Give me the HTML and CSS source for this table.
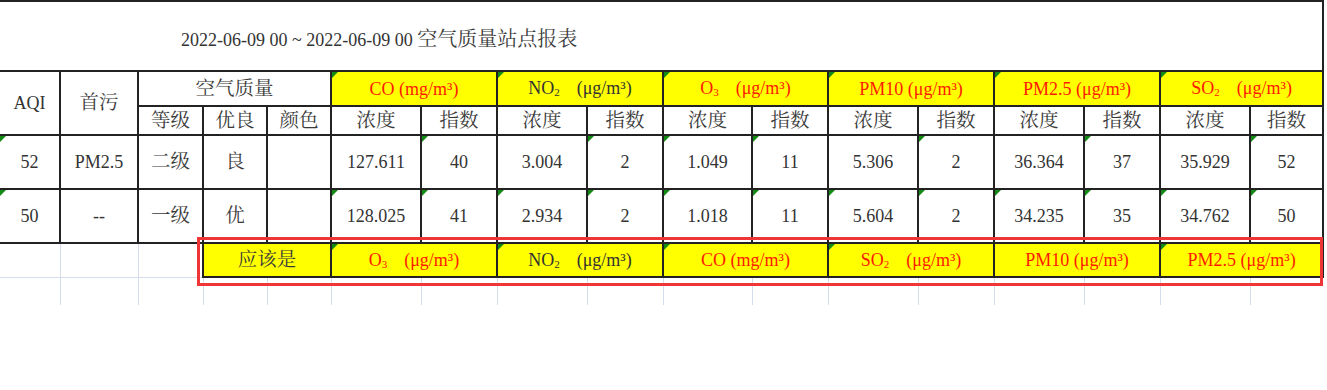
FILE: index.html
```html
<!DOCTYPE html>
<html lang="zh-CN">
<head>
<meta charset="utf-8">
<title>空气质量站点报表</title>
<link rel="stylesheet" href="styles.css">
</head>
<body>
<div class="sheet">
  <table class="grid">
    <colgroup>
      <col class="c60"><col class="c78"><col class="c65"><col class="c64"><col class="c64">
      <col class="c90"><col class="c76"><col class="c90"><col class="c76">
      <col class="c89"><col class="c76"><col class="c90"><col class="c76">
      <col class="c90"><col class="c76"><col class="c90"><col class="c73">
    </colgroup>
    <tr class="r-title">
      <td colspan="17" class="title">2022-06-09 00 ~ 2022-06-09 00 <span class="zh">空气质量站点报表</span></td>
    </tr>
    <tr class="r-h1">
      <td rowspan="2" class="first">AQI</td>
      <td rowspan="2" class="zh">首污</td>
      <td colspan="3" class="zh">空气质量</td>
      <td colspan="2" class="y red t">CO (mg/m³)</td>
      <td colspan="2" class="y t">NO<span class="sub">2</span><span class="gap"></span>(μg/m³)</td>
      <td colspan="2" class="y red t">O<span class="sub">3</span><span class="gap"></span>(μg/m³)</td>
      <td colspan="2" class="y red t">PM10 (μg/m³)</td>
      <td colspan="2" class="y red t">PM2.5 (μg/m³)</td>
      <td colspan="2" class="y red t">SO<span class="sub">2</span><span class="gap"></span>(μg/m³)</td>
    </tr>
    <tr class="r-h2">
      <td class="zh">等级</td><td class="zh">优良</td><td class="zh">颜色</td>
      <td class="zh">浓度</td><td class="zh">指数</td>
      <td class="zh">浓度</td><td class="zh">指数</td>
      <td class="zh">浓度</td><td class="zh">指数</td>
      <td class="zh">浓度</td><td class="zh">指数</td>
      <td class="zh">浓度</td><td class="zh">指数</td>
      <td class="zh">浓度</td><td class="zh">指数</td>
    </tr>
    <tr class="r-d">
      <td class="first t">52</td><td>PM2.5</td><td class="zh">二级</td><td class="zh">良</td><td></td>
      <td>127.611</td><td class="t">40</td>
      <td>3.004</td><td class="t">2</td>
      <td class="t">1.049</td><td class="t">11</td>
      <td>5.306</td><td class="t">2</td>
      <td>36.364</td><td class="t">37</td>
      <td>35.929</td><td class="t">52</td>
    </tr>
    <tr class="r-d">
      <td class="first t">50</td><td>--</td><td class="zh">一级</td><td class="zh">优</td><td></td>
      <td class="t">128.025</td><td class="t">41</td>
      <td class="t">2.934</td><td class="t">2</td>
      <td class="t">1.018</td><td class="t">11</td>
      <td class="t">5.604</td><td class="t">2</td>
      <td class="t">34.235</td><td class="t">35</td>
      <td class="t">34.762</td><td class="t">50</td>
    </tr>
    <tr class="r-b">
      <td class="g first"></td><td class="g"></td><td class="g"></td>
      <td colspan="2" class="y zh">应该是</td>
      <td colspan="2" class="y red t">O<span class="sub">3</span><span class="gap"></span>(μg/m³)</td>
      <td colspan="2" class="y t">NO<span class="sub">2</span><span class="gap"></span>(μg/m³)</td>
      <td colspan="2" class="y red t">CO (mg/m³)</td>
      <td colspan="2" class="y red t">SO<span class="sub">2</span><span class="gap"></span>(μg/m³)</td>
      <td colspan="2" class="y red">PM10 (μg/m³)</td>
      <td colspan="2" class="y red t">PM2.5 (μg/m³)</td>
    </tr>
    <tr class="r-e">
      <td class="first"></td><td></td><td></td><td></td><td></td>
      <td></td><td></td><td></td><td></td><td></td><td></td>
      <td></td><td></td><td></td><td></td><td></td><td class="last"></td>
    </tr>
  </table>
  <div class="mark"></div>
</div>
</body>
</html>
```

FILE: styles.css
```css
html, body {
  margin: 0;
  padding: 0;
  background: #ffffff;
}

body {
  font-family: "Liberation Serif", "Noto Serif CJK SC", "Noto Sans CJK SC", serif;
  font-size: 18px;
  color: #333333;
}

.sheet {
  position: relative;
  width: 1327px;
  height: 390px;
  overflow: hidden;
}

.grid {
  border-collapse: collapse;
  table-layout: fixed;
  width: 1323px;
}

.c60 { width: 60px; }
.c78 { width: 78px; }
.c65 { width: 65px; }
.c64 { width: 64px; }
.c73 { width: 73px; }
.c76 { width: 76px; }
.c89 { width: 89px; }
.c90 { width: 90px; }

.grid td {
  position: relative;
  border: 2px solid #222222;
  padding: 0;
  text-align: center;
  vertical-align: middle;
  white-space: nowrap;
  line-height: 1;
}

.grid td.first {
  border-left: none;
}

.r-title { height: 70px; }
.r-h1 { height: 35px; }
.r-h2 { height: 29px; }
.r-d { height: 54px; }
.r-b { height: 34px; }
.r-e { height: 28px; }

.grid td.title {
  text-align: left;
  padding-left: 181px;
  padding-top: 6px;
  border-left: none;
  font-size: 18px;
}

.zh {
  font-size: 19.5px;
  color: #3a3a3a;
}

.title .zh {
  font-size: 20px;
}

.y {
  background: #ffff00;
}

.red {
  color: #ff1a00;
}

.sub {
  font-size: 11px;
  vertical-align: -2px;
}

.gap {
  display: inline-block;
  width: 17px;
}

.grid td.t::before {
  content: "";
  position: absolute;
  left: 0;
  top: 0;
  border-top: 6px solid #138a13;
  border-right: 6px solid transparent;
}

.grid td.g {
  border-left: 1px solid #d6ddea;
  border-right: 1px solid #d6ddea;
  border-bottom: 1px solid #d6ddea;
}

.grid td.g.first {
  border-left: none;
}

.r-e td {
  border-top: none;
  border-bottom: none;
  border-left: 1px solid #d6ddea;
  border-right: 1px solid #d6ddea;
}

.grid .r-e td.first {
  border-left: none;
}

.grid .r-e td.last {
  border-right: none;
}

.mark {
  position: absolute;
  left: 197px;
  top: 237px;
  width: 1126px;
  height: 49px;
  box-sizing: border-box;
  border: 3px solid #ef3535;
}
```
